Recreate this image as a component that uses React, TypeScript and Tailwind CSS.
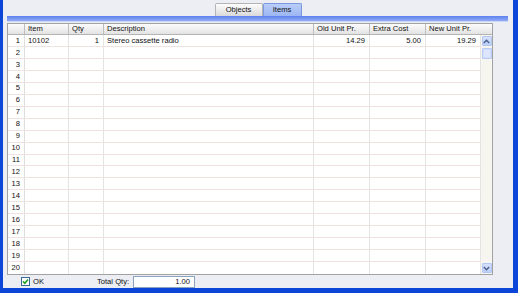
import React from "react";

const cols = [
  { key: "item", label: "Item", w: 44, align: "left" },
  { key: "qty", label: "Qty", w: 35, align: "right" },
  { key: "desc", label: "Description", w: 210, align: "left" },
  { key: "old", label: "Old Unit Pr.", w: 56, align: "right" },
  { key: "extra", label: "Extra Cost", w: 56, align: "right" },
  { key: "new", label: "New Unit Pr.", w: 55, align: "right" },
];

const data: Record<string, string>[] = [
  { item: "10102", qty: "1", desc: "Stereo cassette radio", old: "14.29", extra: "5.00", new: "19.29" },
];

function Chevron({ up }: { up: boolean }) {
  return (
    <svg width="7" height="5" viewBox="0 0 7 5">
      <path
        d={up ? "M0.8 4 L3.5 1.3 L6.2 4" : "M0.8 1 L3.5 3.7 L6.2 1"}
        fill="none"
        stroke="#4a5f8c"
        strokeWidth="1.4"
      />
    </svg>
  );
}

export default function App() {
  const rows = Array.from({ length: 20 }, (_, i) => i);
  return (
    <div className="w-[518px] h-[293px] bg-[#0c46d8] pl-[3px] pr-[5px] pb-[5px] font-['Liberation_Sans',Arial,sans-serif] text-[7.6px] leading-none text-[#111]">
      <div className="h-full bg-[#eceef4] flex flex-col">
        {/* tabs */}
        <div className="h-[16px] pt-[3px] flex justify-center">
          <div className="w-[48px] h-[13px] flex items-center justify-center border border-[#b4b4b4] border-b-0 rounded-t-[2px] bg-gradient-to-b from-[#fdfdfd] to-[#d9d9d9]">
            Objects
          </div>
          <div className="w-[39px] h-[13px] flex items-center justify-center border border-[#7d98e2] border-b-0 rounded-t-[2px] bg-gradient-to-b from-[#b9cdf8] to-[#9cb6f2]">
            Items
          </div>
        </div>
        {/* blue bar */}
        <div className="ml-[4px] mr-[5px] h-[6px] bg-gradient-to-b from-[#5d80ee] to-[#93acf6] border-b border-[#c8d6fa]" />
        {/* table */}
        <div className="mt-[1px] ml-[4px] w-[486px] h-[252px] border border-[#a2a2a2] bg-white flex flex-col">
          {/* header */}
          <div className="h-[11px] flex border-b border-[#b4b4b4] bg-gradient-to-b from-[#fcfcfc] to-[#e3e3e3]">
            <div className="w-[17px] shrink-0 border-r border-[#bdbdbd]" />
            {cols.map((c, i) => (
              <div
                key={c.key}
                className={`shrink-0 flex items-center pl-[3px] ${i < cols.length - 1 ? "border-r border-[#bdbdbd]" : ""}`}
                style={{ width: i === cols.length - 1 ? c.w + 11 : c.w }}
              >
                {c.label}
              </div>
            ))}
          </div>
          {/* body */}
          <div className="flex flex-1 min-h-0">
            <div className="flex flex-col">
              {rows.map((r) => {
                const d = data[r];
                return (
                  <div key={r} className={`h-[12px] flex ${r < 19 ? "border-b border-[#f1e2e2]" : ""}`}>
                    <div className="w-[17px] shrink-0 border-r border-[#dedede] flex items-center justify-end pr-[4px]">
                      {r + 1}
                    </div>
                    {cols.map((c) => (
                      <div
                        key={c.key}
                        className={`shrink-0 border-r border-[#e4e4e4] flex items-center ${c.align === "right" ? "justify-end pr-[4px]" : "justify-start pl-[3px]"}`}
                        style={{ width: c.w }}
                      >
                        {d ? d[c.key] : ""}
                      </div>
                    ))}
                  </div>
                );
              })}
            </div>
            {/* scrollbar */}
            <div className="w-[11px] bg-[#f6f5f0] flex flex-col items-center pt-[1px] pb-[1px]">
              <div className="w-[10px] h-[10px] bg-gradient-to-b from-[#d6e1fc] to-[#bccff8] border border-[#b2c6f2] rounded-[1px] flex items-center justify-center">
                <Chevron up />
              </div>
              <div className="mt-[2px] w-[10px] h-[11px] bg-[#d2defb] border border-[#b9ccf5] rounded-[1px] flex items-center justify-center">
                <div className="w-[6px] h-[7px] bg-[#dde6fc]" />
              </div>
              <div className="flex-1" />
              <div className="w-[10px] h-[10px] bg-gradient-to-b from-[#d6e1fc] to-[#bccff8] border border-[#b2c6f2] rounded-[1px] flex items-center justify-center">
                <Chevron up={false} />
              </div>
            </div>
          </div>
        </div>
        {/* footer */}
        <div className="flex-1 flex items-center">
          <div className="ml-[18px] w-[9px] h-[9px] border border-[#3a6a9a] bg-white flex items-center justify-center">
            <svg width="7" height="7" viewBox="0 0 7 7">
              <path d="M1 3.4 L2.8 5.2 L6 1.4" fill="none" stroke="#22a022" strokeWidth="1.6" />
            </svg>
          </div>
          <span className="ml-[3px]">OK</span>
          <span className="ml-[53px]">Total Qty:</span>
          <div className="ml-[4px] w-[62px] h-[12px] border border-[#8aa3bf] bg-white flex items-center justify-end pr-[4px]">
            1.00
          </div>
        </div>
      </div>
    </div>
  );
}
